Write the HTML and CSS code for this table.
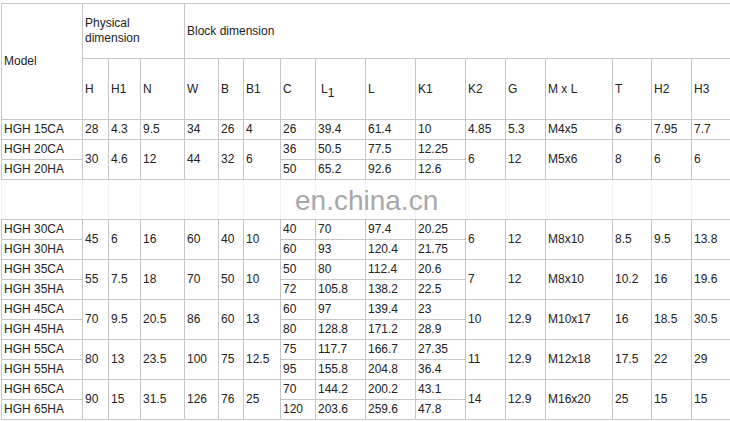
FILE: index.html
```html
<!DOCTYPE html>
<html>
<head>
<meta charset="utf-8">
<link rel="stylesheet" href="styles.css">
</head>
<body>
<div class="wrap">
<table class="spec">
<colgroup>
<col class="c-model"><col class="c26"><col class="c32"><col class="c44"><col class="c34"><col class="c25"><col class="c37"><col class="c35"><col class="c50"><col class="c50"><col class="c50"><col class="c40"><col class="c40"><col class="c67"><col class="c39"><col class="c40"><col class="c44">
</colgroup>
<tr class="h1">
<td rowspan="2">Model</td>
<td colspan="3">Physical dimension</td>
<td colspan="13">Block dimension</td>
</tr>
<tr class="h2">
<td>H</td><td>H1</td><td>N</td><td>W</td><td>B</td><td>B1</td><td>C</td><td class="l1">L<sub>1</sub></td><td>L</td><td>K1</td><td>K2</td><td>G</td><td>M x L</td><td>T</td><td>H2</td><td>H3</td>
</tr>
<tr>
<td>HGH 15CA</td><td>28</td><td>4.3</td><td>9.5</td><td>34</td><td>26</td><td>4</td><td>26</td><td>39.4</td><td>61.4</td><td>10</td><td>4.85</td><td>5.3</td><td>M4x5</td><td>6</td><td>7.95</td><td>7.7</td>
</tr>
<tr>
<td>HGH 20CA</td><td rowspan="2">30</td><td rowspan="2">4.6</td><td rowspan="2">12</td><td rowspan="2">44</td><td rowspan="2">32</td><td rowspan="2">6</td><td>36</td><td>50.5</td><td>77.5</td><td>12.25</td><td rowspan="2">6</td><td rowspan="2">12</td><td rowspan="2">M5x6</td><td rowspan="2">8</td><td rowspan="2">6</td><td rowspan="2">6</td>
</tr>
<tr>
<td>HGH 20HA</td><td>50</td><td>65.2</td><td>92.6</td><td>12.6</td>
</tr>
<tr class="gap">
<td></td><td></td><td></td><td></td><td></td><td></td><td></td><td></td><td></td><td></td><td></td><td></td><td></td><td></td><td></td><td></td><td></td>
</tr>
<tr>
<td>HGH 30CA</td><td rowspan="2">45</td><td rowspan="2">6</td><td rowspan="2">16</td><td rowspan="2">60</td><td rowspan="2">40</td><td rowspan="2">10</td><td>40</td><td>70</td><td>97.4</td><td>20.25</td><td rowspan="2">6</td><td rowspan="2">12</td><td rowspan="2">M8x10</td><td rowspan="2">8.5</td><td rowspan="2">9.5</td><td rowspan="2">13.8</td>
</tr>
<tr>
<td>HGH 30HA</td><td>60</td><td>93</td><td>120.4</td><td>21.75</td>
</tr>
<tr>
<td>HGH 35CA</td><td rowspan="2">55</td><td rowspan="2">7.5</td><td rowspan="2">18</td><td rowspan="2">70</td><td rowspan="2">50</td><td rowspan="2">10</td><td>50</td><td>80</td><td>112.4</td><td>20.6</td><td rowspan="2">7</td><td rowspan="2">12</td><td rowspan="2">M8x10</td><td rowspan="2">10.2</td><td rowspan="2">16</td><td rowspan="2">19.6</td>
</tr>
<tr>
<td>HGH 35HA</td><td>72</td><td>105.8</td><td>138.2</td><td>22.5</td>
</tr>
<tr>
<td>HGH 45CA</td><td rowspan="2">70</td><td rowspan="2">9.5</td><td rowspan="2">20.5</td><td rowspan="2">86</td><td rowspan="2">60</td><td rowspan="2">13</td><td>60</td><td>97</td><td>139.4</td><td>23</td><td rowspan="2">10</td><td rowspan="2">12.9</td><td rowspan="2">M10x17</td><td rowspan="2">16</td><td rowspan="2">18.5</td><td rowspan="2">30.5</td>
</tr>
<tr>
<td>HGH 45HA</td><td>80</td><td>128.8</td><td>171.2</td><td>28.9</td>
</tr>
<tr>
<td>HGH 55CA</td><td rowspan="2">80</td><td rowspan="2">13</td><td rowspan="2">23.5</td><td rowspan="2">100</td><td rowspan="2">75</td><td rowspan="2">12.5</td><td>75</td><td>117.7</td><td>166.7</td><td>27.35</td><td rowspan="2">11</td><td rowspan="2">12.9</td><td rowspan="2">M12x18</td><td rowspan="2">17.5</td><td rowspan="2">22</td><td rowspan="2">29</td>
</tr>
<tr>
<td>HGH 55HA</td><td>95</td><td>155.8</td><td>204.8</td><td>36.4</td>
</tr>
<tr>
<td>HGH 65CA</td><td rowspan="2">90</td><td rowspan="2">15</td><td rowspan="2">31.5</td><td rowspan="2">126</td><td rowspan="2">76</td><td rowspan="2">25</td><td>70</td><td>144.2</td><td>200.2</td><td>43.1</td><td rowspan="2">14</td><td rowspan="2">12.9</td><td rowspan="2">M16x20</td><td rowspan="2">25</td><td rowspan="2">15</td><td rowspan="2">15</td>
</tr>
<tr>
<td>HGH 65HA</td><td>120</td><td>203.6</td><td>259.6</td><td>47.8</td>
</tr>
</table>
<div class="watermark">en.china.cn</div>
</div>
</body>
</html>
```

FILE: styles.css
```css
html, body {
  margin: 0;
  padding: 0;
  background: #fff;
  overflow: hidden;
}
.wrap {
  position: relative;
  padding: 3px 0 0 1px;
}
.spec {
  border-collapse: collapse;
  table-layout: fixed;
  width: 734px;
  font-family: "Liberation Sans", Arial, sans-serif;
  font-size: 12px;
  color: #222;
}
.spec td {
  border: 1px solid #c6c6c6;
  padding: 0 2px;
  height: 19px;
  line-height: 15px;
  vertical-align: middle;
  text-align: left;
  white-space: nowrap;
  overflow: hidden;
}
.spec .h1 td { height: 54px; white-space: normal; }
.spec .h2 td { height: 60px; }
.spec .gap td { height: 39px; border-left-color: #f1f1f1; border-right-color: #f1f1f1; }
.spec .l1 { padding-left: 5px; }
.spec sub { font-size: 12px; vertical-align: -4px; line-height: 0; }
.c-model { width: 81px; }
.c25 { width: 25px; }
.c26 { width: 26px; }
.c32 { width: 32px; }
.c34 { width: 34px; }
.c35 { width: 35px; }
.c37 { width: 37px; }
.c39 { width: 39px; }
.c40 { width: 40px; }
.c44 { width: 44px; }
.c50 { width: 50px; }
.c67 { width: 67px; }
.watermark {
  position: absolute;
  left: 295px;
  top: 185px;
  font-family: "Liberation Sans", Arial, sans-serif;
  font-size: 28px;
  color: #a8a8a8;
  line-height: 32px;
  letter-spacing: 0;
}
```
